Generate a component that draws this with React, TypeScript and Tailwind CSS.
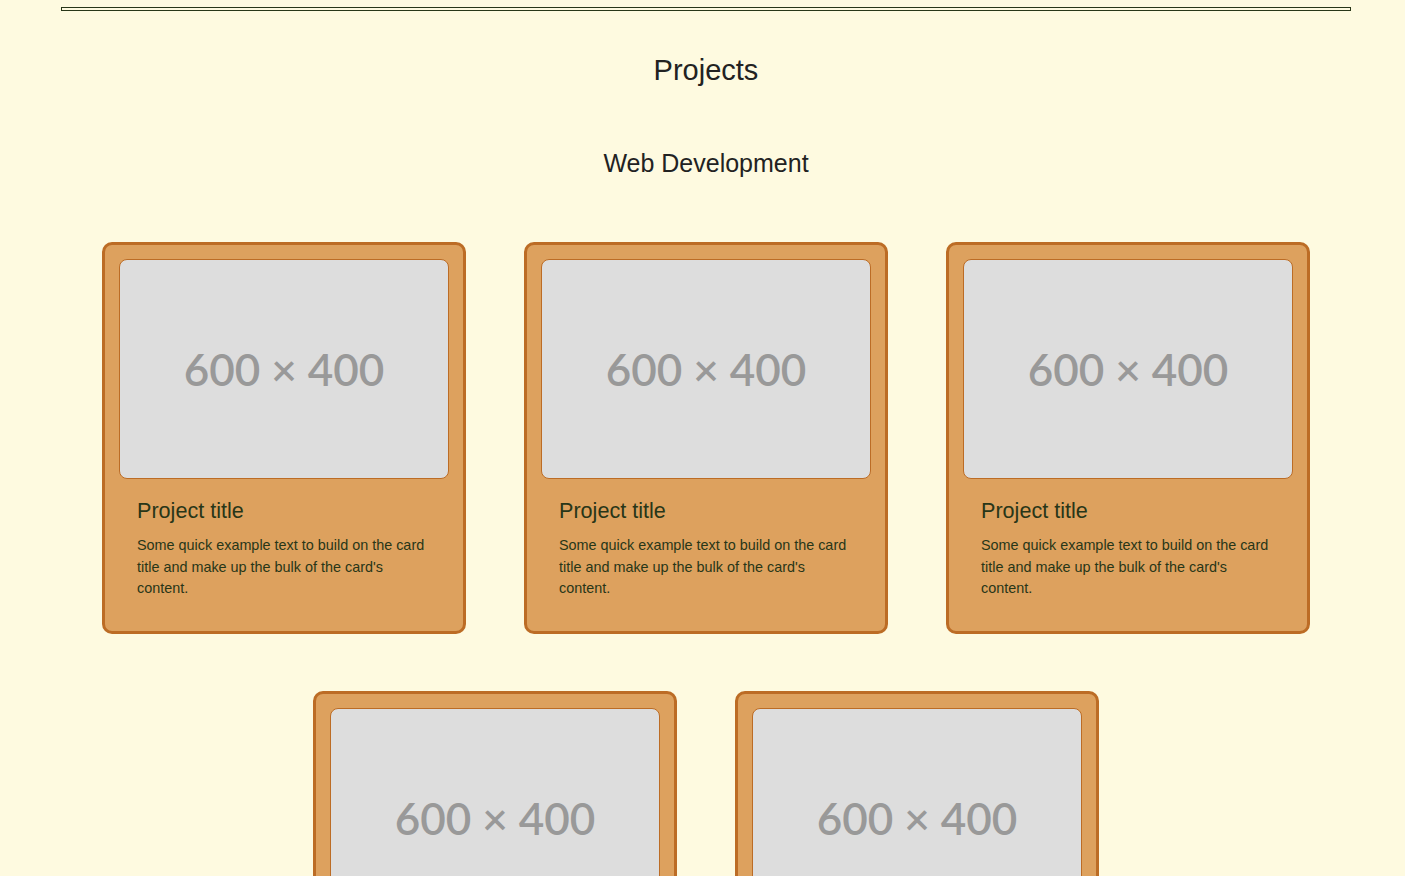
const cards = [1, 2, 3, 4, 5];

const ProjectCard = () => {
  return (
    <div className="w-[364px] shrink-0 rounded-[10px] border-[3px] border-[#bc6c25] bg-[#dda15e] p-[14px]">
      <div className="flex h-[220px] w-full items-center justify-center rounded-[8px] border border-[#bc6c25] bg-[#dddddd]">
        <span className="font-['Lato',sans-serif] text-[44px] font-semibold text-[#999999]">600 × 400</span>
      </div>
      <div className="px-[18px] pt-[19px] pb-[17px] text-[#283618]">
        <h5 className="text-[21.6px] leading-[26px]">Project title</h5>
        <p className="mt-[11px] text-[14.4px] leading-[21.6px]">
          Some quick example text to build on the card title and make up the bulk of the card's content.
        </p>
      </div>
    </div>
  );
};

export default function App() {
  return (
    <div className="min-h-screen bg-[#fefae0] pl-[7px] font-['Liberation_Sans',Arial,sans-serif] text-[#222222]">
      <div className="mx-auto w-[1290px] pt-[7px]">
        <div className="h-[4px] w-full border border-[#283618]" />
      </div>
      <h2 className="mt-[42px] text-center text-[29px] leading-[35px]">Projects</h2>
      <h3 className="mt-[60px] text-center text-[25px] leading-[30px]">Web Development</h3>
      <div className="mx-auto mt-[64px] flex w-[1208px] flex-wrap justify-center gap-x-[58px] gap-y-[57px] pb-10">
        {cards.map((c) => (
          <ProjectCard key={c} />
        ))}
      </div>
    </div>
  );
}
